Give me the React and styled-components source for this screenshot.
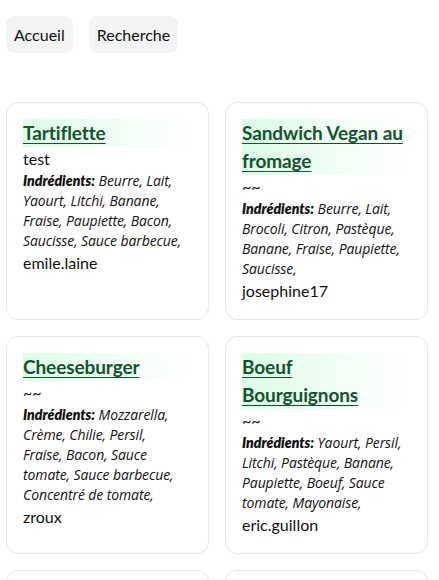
import styled, { createGlobalStyle } from "styled-components"

const GlobalStyle = createGlobalStyle`
body{
  margin:0;
  background:#ffffff;
  font-family:Lato,"Noto Sans",sans-serif;
  color:#111111;
}
`;
const Page = styled.div`
padding:16px 6px 0px 6px;
`;
const Nav = styled.nav`
display:flex;
gap:16px;
margin-bottom:49px;
`;
const NavButton = styled.button`
font-family:inherit;
font-size:16px;
line-height:21px;
padding:8px 8px;
border:none;
border-radius:8px;
background-color:#f3f4f6;
color:#111111;
cursor:pointer;
`;
const Grid = styled.div`
display:grid;
grid-template-columns:repeat(2,203px);
gap:16px;
`;
const Card = styled.div`
border:1px solid #e5e7eb;
border-radius:12px;
padding:16px 23px 16px 16px;
background:white;
`;
const Title = styled.a`
display:block;
font-size:19px;
font-weight:700;
letter-spacing:-0.1px;
line-height:28px;
color:#14532d;
text-decoration:underline;
text-underline-offset:3px;
background:linear-gradient(to right,#dcfce7,#ffffff);
`;
const Desc = styled.p`
margin:0;
font-size:16px;
line-height:24px;
`;
const Ingredients = styled.p`
margin:0;
font-family:"Open Sans",sans-serif;
font-size:14px;
letter-spacing:-0.1px;
line-height:20px;
font-style:italic;
b{
  font-family:Lato,sans-serif;
  font-weight:800;
  letter-spacing:0;
}
`;
const Author = styled.p`
margin:0;
font-size:16px;
line-height:24px;
`;

const recipes = [
  { title: "Tartiflette", desc: "test", items: "Beurre, Lait, Yaourt, Litchi, Banane, Fraise, Paupiette, Bacon, Saucisse, Sauce barbecue,", author: "emile.laine" },
  { title: "Sandwich Vegan au fromage", desc: "~~", items: "Beurre, Lait, Brocoli, Citron, Pastèque, Banane, Fraise, Paupiette, Saucisse,", author: "josephine17" },
  { title: "Cheeseburger", desc: "~~", items: "Mozzarella, Crème, Chilie, Persil, Fraise, Bacon, Sauce tomate, Sauce barbecue, Concentré de tomate,", author: "zroux" },
  { title: "Boeuf Bourguignons", desc: "~~", items: "Yaourt, Persil, Litchi, Pastèque, Banane, Paupiette, Boeuf, Sauce tomate, Mayonaise,", author: "eric.guillon" },
  { title: "Pâtes carbonara", desc: "~~", items: "Lait, Crème, Bacon,", author: "emile.laine" },
  { title: "Salade", desc: "~~", items: "Citron, Persil,", author: "zroux" },
]

const App = () => {
  return (
    <Page>
      <GlobalStyle />
      <Nav>
        <NavButton>Accueil</NavButton>
        <NavButton>Recherche</NavButton>
      </Nav>
      <Grid>
        {recipes.map((r, i) => (
          <Card key={i}>
            <Title href="#">{r.title}</Title>
            <Desc>{r.desc}</Desc>
            <Ingredients><b>Indrédients:</b> {r.items}</Ingredients>
            <Author>{r.author}</Author>
          </Card>
        ))}
      </Grid>
    </Page>
  )
}

export default App
